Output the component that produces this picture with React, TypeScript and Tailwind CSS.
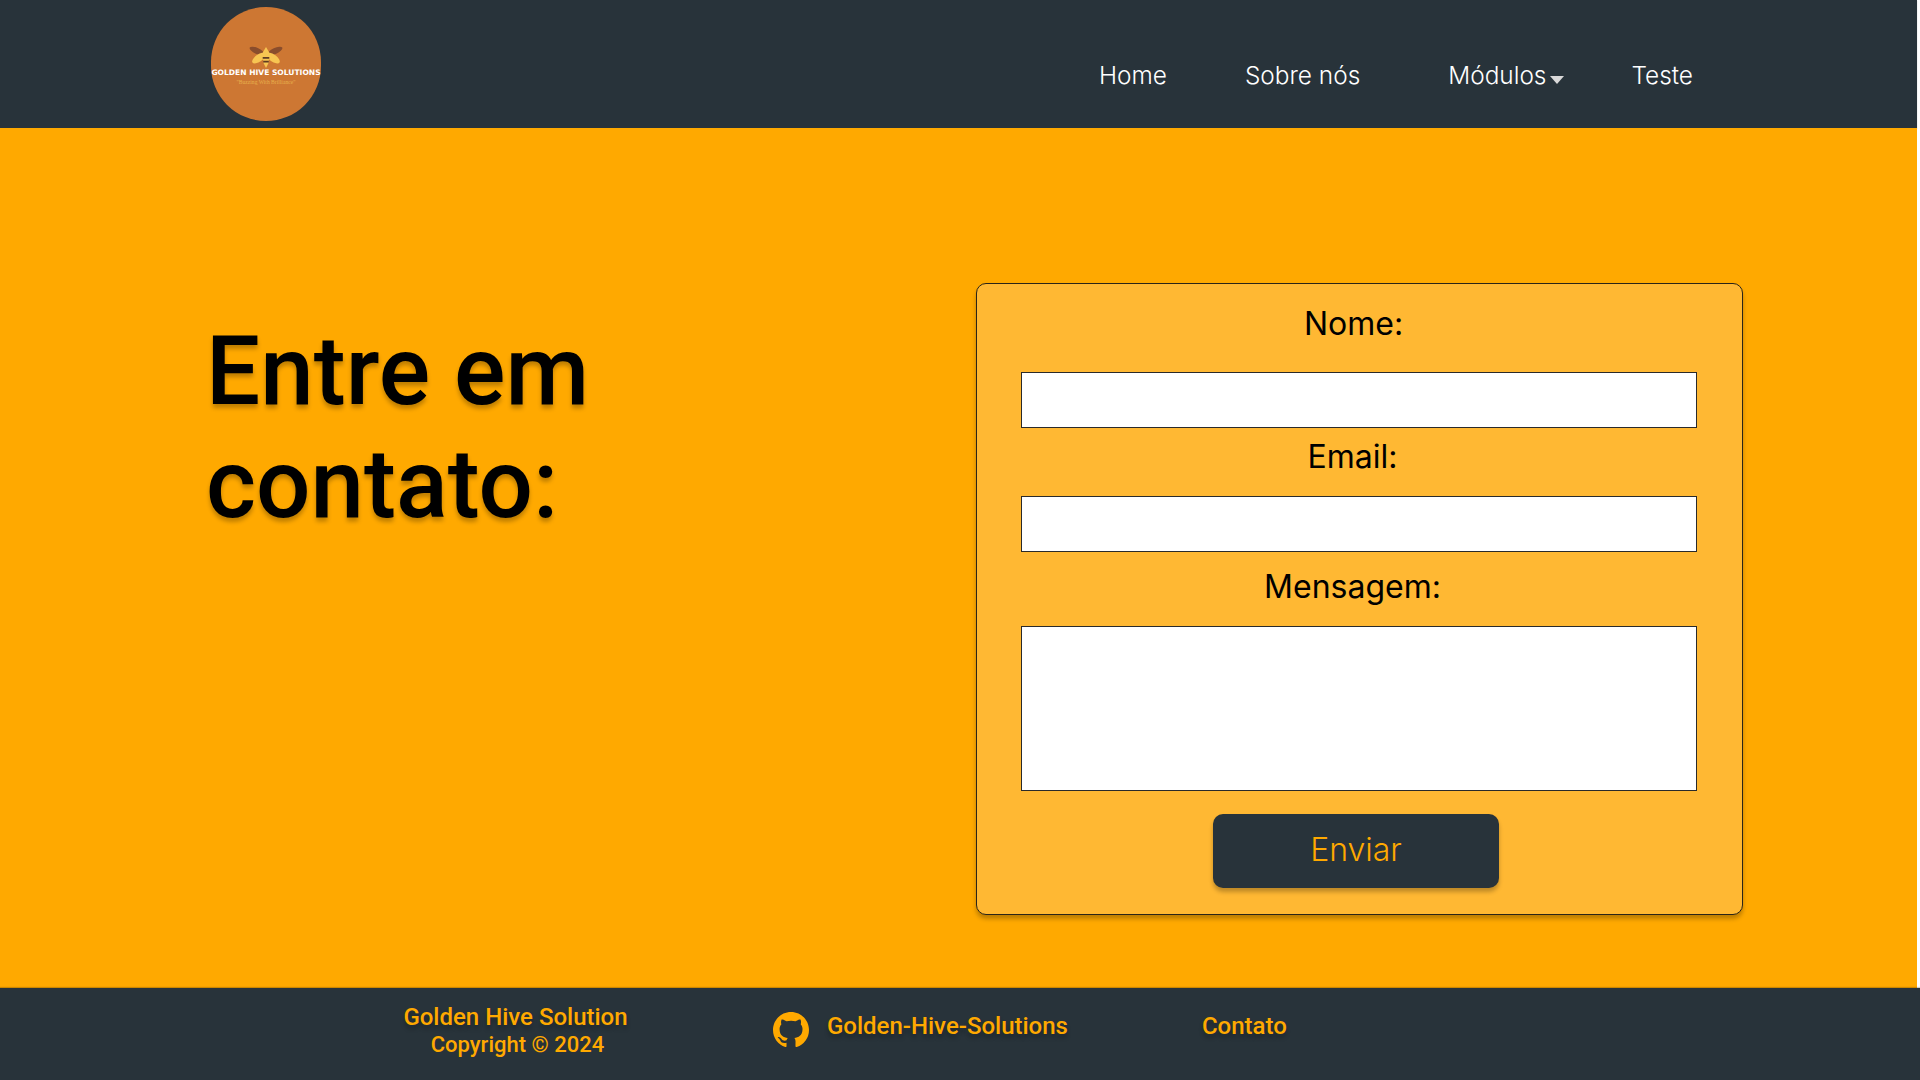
import React from 'react';

const NAVY = 'bg-[#28333a]';

const Logo: React.FC = () => (
  <div className="w-[110px] h-[114px] rounded-full bg-[#cd7733] flex flex-col items-center">
    <svg width="34" height="22" viewBox="0 0 34 22" className="mt-[39px]">
      <ellipse cx="8" cy="5" rx="8" ry="3" transform="rotate(25 8 5)" fill="#8a4d2c" />
      <ellipse cx="26" cy="5" rx="8" ry="3" transform="rotate(-25 26 5)" fill="#8a4d2c" />
      <ellipse cx="10" cy="12" rx="8" ry="3.6" transform="rotate(-35 10 12)" fill="#f7c552" />
      <ellipse cx="24" cy="12" rx="8" ry="3.6" transform="rotate(35 24 12)" fill="#f7c552" />
      <path d="M17 1 L20 6 L20 9 L14 9 L14 6 Z" fill="#f7c552" />
      <path d="M13.5 9 H20.5 L19.5 17 L17 22 L14.5 17 Z" fill="#f7c552" />
      <path d="M13.7 11 H20.3 V12.8 H13.7 Z M14.2 14.8 H19.8 V16.6 H14.2 Z" fill="#5f3a22" />
    </svg>
    <span className="text-[7.55px] leading-[10px] font-bold text-white whitespace-nowrap font-['DejaVu_Sans']">GOLDEN HIVE SOLUTIONS</span>
    <span className="mt-[1px] text-[5.6px] leading-[6px] text-[#e8b04c] whitespace-nowrap font-['Liberation_Serif']">"Buzzing With Brilliance"</span>
  </div>
);

const Field: React.FC<{ label: string; labelClass: string; children: React.ReactNode }> = ({ label, labelClass, children }) => (
  <>
    <label className={`block text-center text-[32px] leading-[39px] text-black ${labelClass}`}>{label}</label>
    {children}
  </>
);

const App: React.FC = () => {
  return (
    <div className="w-full h-[1080px] flex flex-col font-['Inter',sans-serif] bg-white">
      <header className={`${NAVY} w-[1917px] h-[128px] flex items-start pl-[211px] pt-[7px] shadow-[0_1px_1px_rgba(0,0,0,0.25)]`}>
        <Logo />
        <nav className="ml-[778px] mt-[54px] flex items-center text-[24.4px] leading-[29px] text-white font-light">
          <a>Home</a>
          <a className="ml-[78px]">Sobre nós</a>
          <a className="ml-[88px] flex items-center">
            Módulos
            <span className="ml-[4px] mt-[8px] w-0 h-0 border-x-[7px] border-x-transparent border-t-[8px] border-t-[#d9d9d9]" />
          </a>
          <a className="ml-[67px]">Teste</a>
        </nav>
      </header>

      <main className="w-[1917px] flex-1 flex items-start pl-[206px] bg-[#ffa900]">
        <h1 className="w-[770px] mt-[187px] text-[96px] leading-[113px] font-medium text-black font-['Roboto',sans-serif] [text-shadow:0_4px_4px_rgba(0,0,0,0.25)]">
          Entre em<br />contato:
        </h1>
        <form className="mt-[155px] w-[767px] h-[632px] rounded-[10px] border border-[#2a2418] bg-[#ffb833] shadow-[0_4px_4px_rgba(0,0,0,0.25)] pl-[44px] pr-[44px] pt-[20px]">
          <Field label="Nome:" labelClass="mr-[12px]">
            <input className="block mt-[29px] w-[676px] h-[56px] bg-white border border-[#2a2a2a]" />
          </Field>
          <Field label="Email:" labelClass="mr-[14px] mt-[9px]">
            <input className="block mt-[20px] w-[676px] h-[56px] bg-white border border-[#2a2a2a]" />
          </Field>
          <Field label="Mensagem:" labelClass="mr-[14px] mt-[15px]">
            <textarea className="block mt-[20px] w-[676px] h-[165px] bg-white border border-[#2a2a2a] resize-none" />
          </Field>
          <button type="button" className={`${NAVY} block mt-[23px] ml-[192px] w-[286px] h-[74px] pb-[3px] rounded-[10px] text-[32px] text-[#ffa900] font-light shadow-[0_4px_4px_rgba(0,0,0,0.25)]`}>
            Enviar
          </button>
        </form>
      </main>

      <footer className={`${NAVY} w-full h-[92px] flex items-start font-['Roboto',sans-serif] font-medium text-[#ffa900] shadow-[0_-1px_1px_rgba(0,0,0,0.2)]`}>
        <div className="ml-[403px] w-[225px] mt-[15px] flex flex-col items-center [text-shadow:0_4px_4px_rgba(0,0,0,0.25)]">
          <span className="text-[24px] leading-[28px] whitespace-nowrap">Golden Hive Solution</span>
          <span className="text-[22px] leading-[26px] ml-[4px] mt-[1px] whitespace-nowrap [text-shadow:none]">Copyright © 2024</span>
        </div>
        <svg viewBox="0 0 16 16" width="36" height="36" fill="currentColor" className="ml-[145px] mt-[24px]">
          <path d="M8 0C3.58 0 0 3.58 0 8c0 3.54 2.29 6.53 5.47 7.59.4.07.55-.17.55-.38 0-.19-.01-.82-.01-1.49-2.01.37-2.53-.49-2.69-.94-.09-.23-.48-.94-.82-1.13-.28-.15-.68-.52-.01-.53.63-.01 1.08.58 1.23.82.72 1.21 1.87.87 2.33.66.07-.52.28-.87.51-1.07-1.78-.2-3.64-.89-3.64-3.95 0-.87.31-1.59.82-2.15-.08-.2-.36-1.02.08-2.12 0 0 .67-.21 2.2.82.64-.18 1.32-.27 2-.27s1.36.09 2 .27c1.53-1.04 2.2-.82 2.2-.82.44 1.1.16 1.92.08 2.12.51.56.82 1.27.82 2.15 0 3.07-1.87 3.75-3.65 3.95.29.25.54.73.54 1.48 0 1.07-.01 1.93-.01 2.2 0 .21.15.46.55.38A8.01 8.01 0 0 0 16 8c0-4.42-3.58-8-8-8z" />
        </svg>
        <a className="ml-[18px] mt-[24px] text-[24px] leading-[28px] whitespace-nowrap [text-shadow:0_4px_4px_rgba(0,0,0,0.25)]">Golden-Hive-Solutions</a>
        <a className="ml-[134px] mt-[24px] text-[24px] leading-[28px] whitespace-nowrap [text-shadow:0_4px_4px_rgba(0,0,0,0.25)]">Contato</a>
      </footer>
    </div>
  );
};

export default App;
